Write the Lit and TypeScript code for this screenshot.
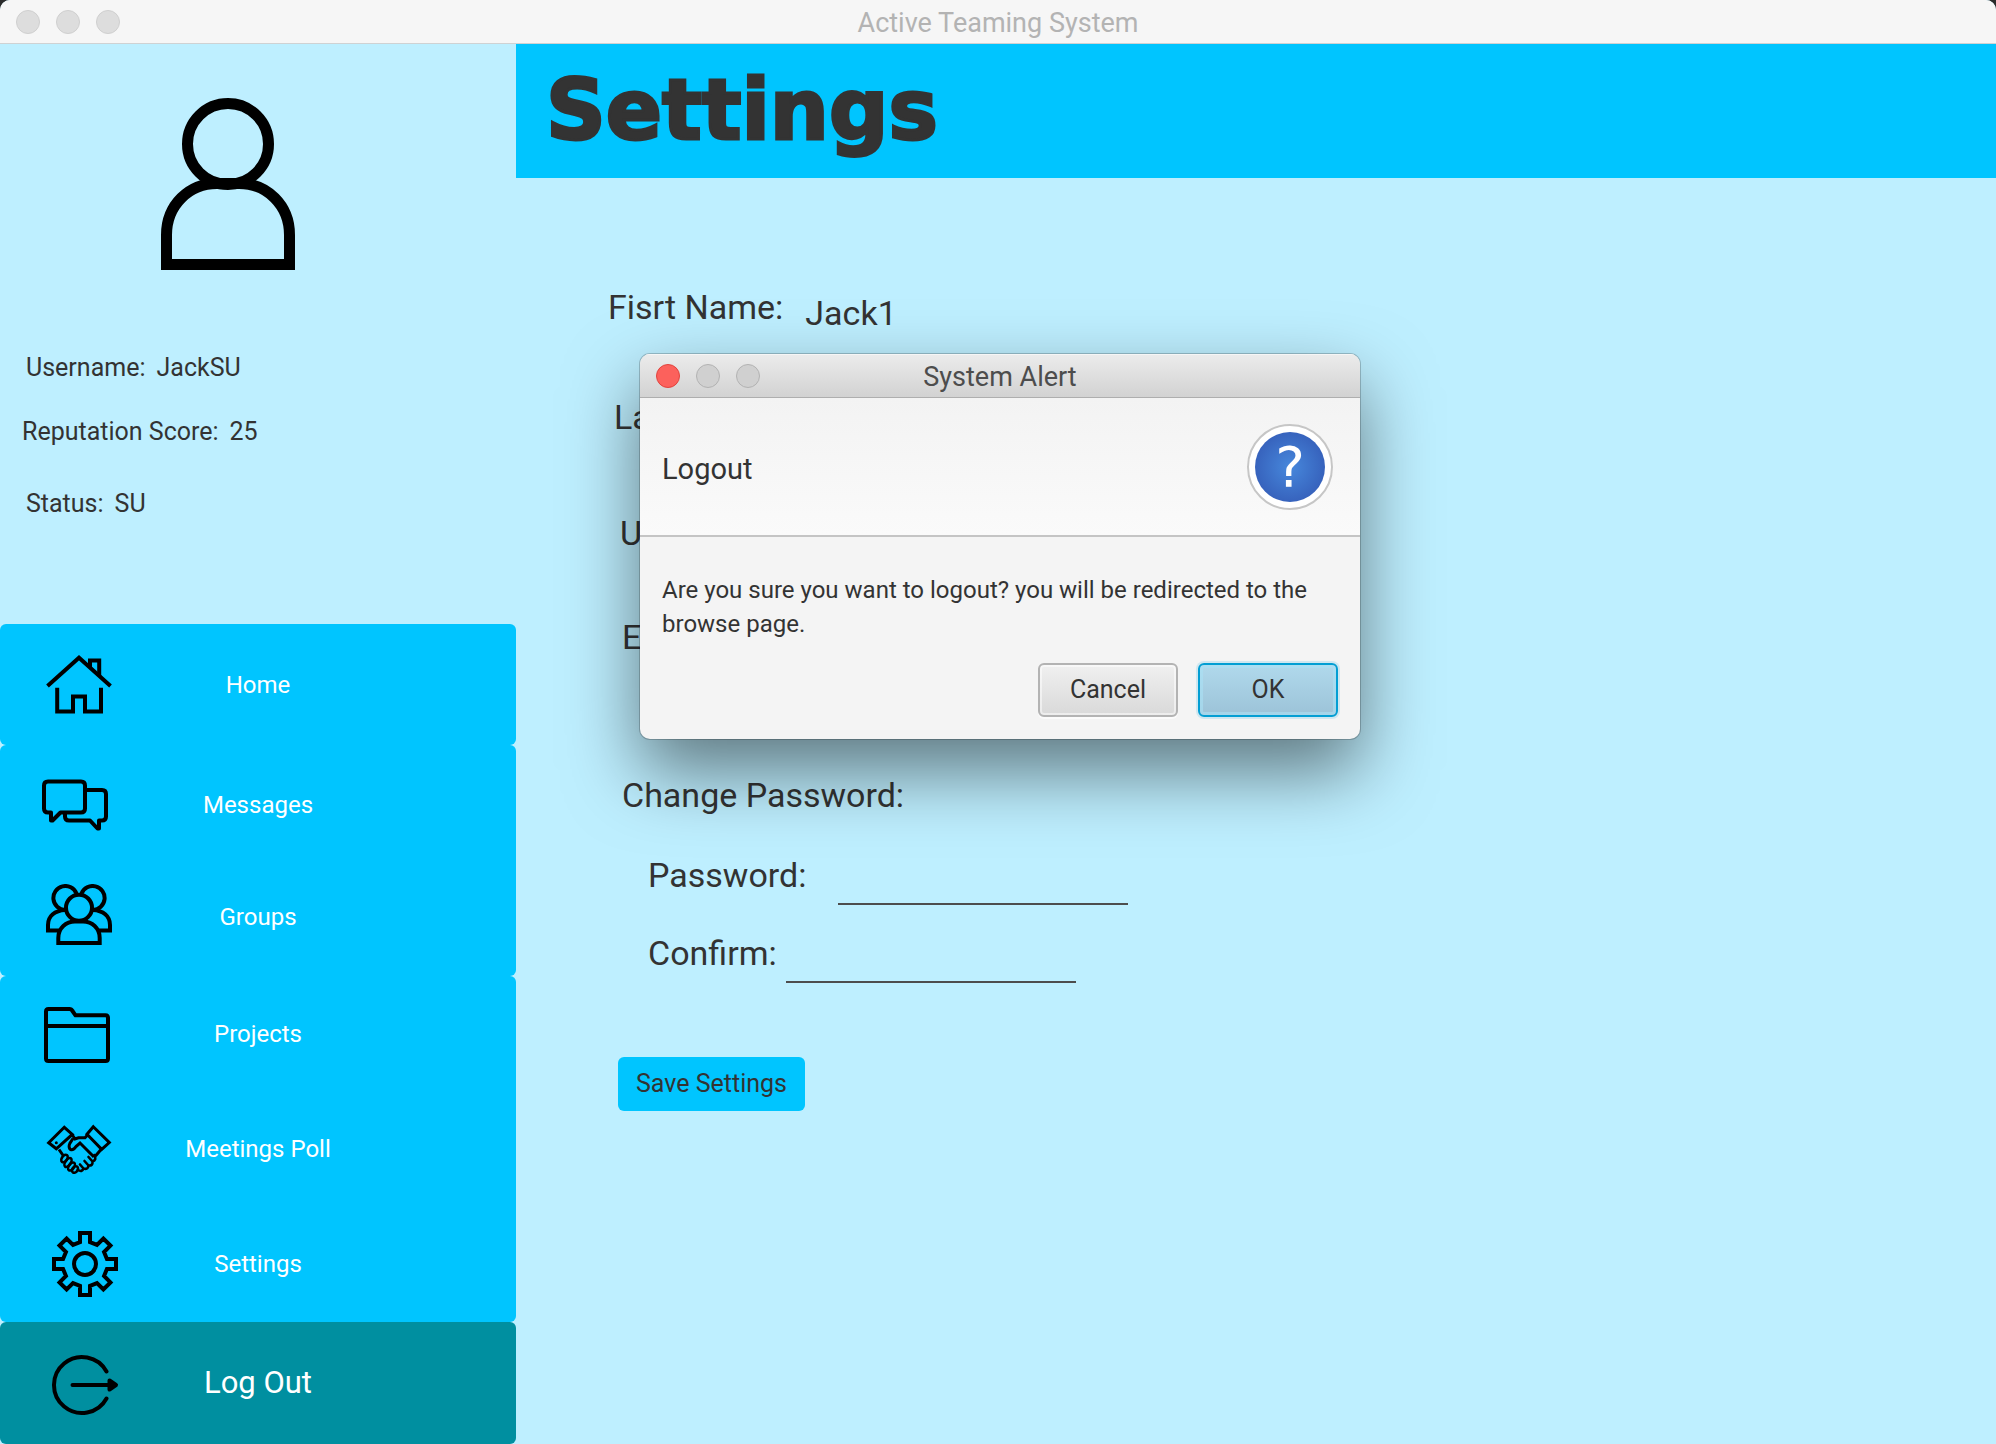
import { LitElement, html, css, svg, nothing, type TemplateResult, type SVGTemplateResult } from "lit";
import { customElement, property } from "lit/decorators.js";
import { classMap } from "lit/directives/class-map.js";

/** Outline of a cog centred on (cx, cy), with evenly spaced square teeth. */
function cogPath(cx: number, cy: number, teeth: number, outer: number, root: number, half: number): string {
  const points: string[] = [];
  const base = Math.sqrt(root * root - half * half);
  for (let i = 0; i < teeth; i++) {
    const a = (i * 2 * Math.PI) / teeth;
    for (const [x, y] of [[-half, -base], [-half, -outer], [half, -outer], [half, -base]]) {
      const px = cx + x * Math.cos(a) - y * Math.sin(a);
      const py = cy + x * Math.sin(a) + y * Math.cos(a);
      points.push(`${px.toFixed(2)} ${py.toFixed(2)}`);
    }
  }
  return `M${points.join("L")}Z`;
}

const icons: Record<string, SVGTemplateResult> = {
  home: svg`<g stroke-width="4">
    <path d="M5.5 34 37 5.8 68.5 34"/>
    <path d="M48 15V8.5H57.2V24"/>
    <path d="M15.2 35.8V59.5H31V44.5H43V59.5H59V35.8"/></g>`,
  messages: svg`<g stroke-width="4" stroke-linejoin="round">
    <path d="M6 9.5H39q4 0 4 4V36.5q0 4-4 4H18.5L10.5 48.5H9V40.5H6q-4 0-4-4V13.5q0-4 4-4z"/>
    <path d="M43 18H60q4 0 4 4V44.5q0 4-4 4H57V56.5H55.5L48 48.5H27q-4 0-4-4V41"/></g>`,
  groups: svg`<g stroke-width="4">
    <circle cx="37" cy="23.7" r="13"/>
    <path d="M34.5 9.5A12 12 0 1 0 23 26M39.5 9.5A12 12 0 1 1 51 26"/>
    <path d="M23 26C13 26.5 6 32 6 41V46.5H18M51 26C61 26.5 68 32 68 41V46.5H56"/>
    <path d="M16.3 59V54C16.3 44 24 37.5 33 37.5H41C50 37.5 57.7 44 57.7 54V59z"/></g>`,
  projects: svg`<g stroke-width="4" stroke-linejoin="round">
    <path d="M4 25V10.5Q4 8 6.5 8H27.5Q29.5 8 30.5 10L33.5 14.3H63.5Q66 14.3 66 17V57.5Q66 60 63.5 60H6.5Q4 60 4 57.5V25H66"/></g>`,
  meetings: svg`<g stroke-width="3">
    <path d="M6.7 26.8 22.3 11.3 30.3 18.4 14.3 32.8zM51.3 10.8 67.3 26.5 59.7 33.4 45 18.2z"/>
    <path d="M30 18.5 33 23 36.5 21.8H43L46 18.5M31 22.5 27.8 27.5Q26 31.5 28.5 33.5Q31.5 34.5 34 30.5L38 27L52 41M17 33.5 21.5 40M59 33.5 53.5 40"/>
    <g stroke-width="2.6">
      <ellipse cx="22.5" cy="42.5" rx="2.6" ry="4.2" transform="rotate(35 22.5 42.5)"/>
      <ellipse cx="26" cy="46.5" rx="2.6" ry="5" transform="rotate(35 26 46.5)"/>
      <ellipse cx="29.5" cy="50.5" rx="2.6" ry="4.6" transform="rotate(35 29.5 50.5)"/>
      <ellipse cx="33" cy="53.5" rx="2.6" ry="3.6" transform="rotate(35 33 53.5)"/>
      <path stroke-linecap="round" d="M36 54Q40 56.5 41.5 52.5Q46 54 46.5 49.5Q51 50 50.5 45.5Q55 44 52.5 39M41.5 52.5 38 48.5M46.5 49.5 42.5 45M50.5 45.5 46.5 41"/>
    </g></g>
    <circle cx="14.3" cy="26.8" r="1.5" fill="currentColor" stroke="none"/>`,
  settings: svg`<g stroke-width="4">
    <path d=${cogPath(43, 33, 8, 31, 22.5, 5)}/>
    <circle cx="43" cy="33" r="11"/></g>`,
  logout: svg`<g stroke-width="4" stroke-linecap="round" stroke-linejoin="round">
    <path d="M64.5 21.5A28 28 0 1 0 64.5 48.5M30.5 35H66"/>
    <path d="M67.5 30.5 74 35 67.5 39.5z" fill="currentColor"/></g>`,
};

@customElement("traffic-lights")
class TrafficLights extends LitElement {
  @property({ type: Boolean }) active = false;

  static styles = css`
    :host { display: flex; gap: 16px; }
    .light {
      width: 24px; height: 24px; padding: 0; box-sizing: border-box;
      border: 1px solid #cfcfcf; border-radius: 50%; background: #dddddd;
    }
    .light.active { border-color: #b2b2b2; background: #d0d0d0; }
    .light.close { border-color: #e0443e; background: #fc615c; }
  `;

  render() {
    return html`${["Close", "Minimize", "Zoom"].map(
      (name) => html`<button type="button" aria-label=${name}
        class=${classMap({ light: true, active: this.active, close: this.active && name === "Close" })}></button>`
    )}`;
  }
}

@customElement("nav-button")
class NavButton extends LitElement {
  @property() icon = "";
  @property() label = "";
  @property({ type: Boolean }) accent = false;

  static styles = css`
    :host { display: flex; }
    .item {
      flex: 1; display: grid; align-items: center; padding: 0; border: 0;
      border-radius: var(--corners, 6px); background: #00c5ff; color: #ffffff;
      font: 24px/32px Roboto, "Liberation Sans", sans-serif; cursor: pointer;
    }
    .item.accent { background: #008fa0; font-size: 31px; line-height: 40px; }
    .icon, .label { grid-area: 1 / 1; }
    .icon {
      width: 78px; height: 66px; margin-left: 42px;
      color: #000000; fill: none; stroke: currentColor;
    }
    .label { justify-self: center; }
  `;

  render() {
    return html`<button type="button" class=${classMap({ item: true, accent: this.accent })}>
      <svg class="icon" viewBox="0 0 78 66" aria-hidden="true">${icons[this.icon]}</svg>
      <span class="label">${this.label}</span>
    </button>`;
  }
}

@customElement("system-alert")
class SystemAlert extends LitElement {
  static styles = css`
    :host { display: block; width: 720px; color: #333333; font: 24px/34px Roboto, "Liberation Sans", sans-serif; }
    .dialog {
      border-radius: 10px; overflow: hidden; background: #f4f4f4;
      box-shadow: 0 0 0 1px rgba(0, 0, 0, 0.2), 0 32px 72px rgba(0, 0, 0, 0.5);
    }
    .bar {
      display: grid; grid-template-columns: 1fr auto 1fr; align-items: center;
      height: 44px; padding: 0 16px; box-sizing: border-box;
      border-bottom: 1px solid #aeaeae; box-shadow: inset 0 1px #f6f6f6;
      background: linear-gradient(#ececec, #d2d2d2);
    }
    .title { margin: 0; padding-top: 2px; font-size: 27px; font-weight: 400; color: #4d4d4d; }
    .head {
      display: flex; align-items: center; justify-content: space-between;
      padding: 26px 27px 25px 22px; border-bottom: 2px solid #c4c4c4;
      background: linear-gradient(#f3f3f3, #fafafa);
    }
    .heading { margin: 0; padding-top: 4px; font-size: 29px; font-weight: 400; }
    .badge {
      display: grid; place-items: center; width: 86px; height: 86px; box-sizing: border-box;
      border: 2px solid #c6c6c6; border-radius: 50%; background: #ffffff;
    }
    .mark {
      width: 70px; height: 70px; border-radius: 50%; text-align: center;
      background: radial-gradient(#4788dc, #3763bd 70%); color: #ffffff;
      font: 56px/70px "DejaVu Sans", "Noto Sans", sans-serif;
    }
    .body { padding: 36px 22px 22px; }
    .message { margin: 0 0 22px; }
    .actions { display: flex; justify-content: flex-end; gap: 20px; }
    .action {
      width: 140px; height: 54px; padding: 0; box-sizing: border-box;
      border: 2px solid #b3b3b3; border-radius: 6px; color: inherit; font: inherit; font-size: 25px;
      background: linear-gradient(#f0f0f0, #d9d9d9);
      box-shadow: inset 0 0 0 2px rgba(255, 255, 255, 0.5), 0 2px #fbfbfb;
    }
    .action.primary {
      border-color: #039ed3; background: linear-gradient(#b0d9ec, #9cc3d8);
      box-shadow: inset 0 0 0 3px rgba(170, 225, 245, 0.6), 0 0 0 2px #cfe7f0;
    }
  `;

  render() {
    return html`<section class="dialog" role="dialog" aria-labelledby="alert-title">
      <header class="bar">
        <traffic-lights active></traffic-lights>
        <h2 class="title" id="alert-title">System Alert</h2>
      </header>
      <div class="head">
        <p class="heading">Logout</p>
        <div class="badge"><span class="mark">?</span></div>
      </div>
      <div class="body">
        <p class="message">Are you sure you want to logout? you will be redirected to the browse page.</p>
        <div class="actions">
          <button type="button" class="action">Cancel</button>
          <button type="button" class="action primary">OK</button>
        </div>
      </div>
    </section>`;
  }
}

interface Detail { key: string; label: string; value?: string; }

@customElement("app-root")
class AppRoot extends LitElement {
  static styles = css`
    :host {
      display: block; background: #2b2b2b; color: #333333;
      font-family: Roboto, "Liberation Sans", sans-serif;
    }
    .window {
      position: relative; display: flex; flex-direction: column; min-height: 100vh;
      border-radius: 10px 10px 0 0; overflow: hidden; background: #beefff;
    }
    .bar {
      display: grid; grid-template-columns: 1fr auto 1fr; align-items: center;
      height: 44px; padding: 0 16px; box-sizing: border-box;
      border-bottom: 1px solid #cfd2d3; background: #f6f6f6;
    }
    .bar-title { padding-top: 2px; font-size: 27px; line-height: 34px; color: #b3b3b3; }
    .layout { flex: 1; display: grid; grid-template-columns: minmax(320px, 516px) 1fr; }

    .sidebar { display: flex; flex-direction: column; justify-content: space-between; }
    .avatar {
      display: block; width: 134px; height: 172px; margin: 54px 0 82px 161px;
      fill: none; stroke: #000000; stroke-width: 11;
    }
    .profile { margin: 0; padding-left: 26px; font-size: 25px; line-height: 32px; }
    .fact { display: flex; gap: 11px; margin-bottom: 32px; }
    .fact dd { margin: 0; }
    .fact.score { margin-left: -4px; margin-bottom: 40px; }
    .nav { display: flex; flex-direction: column; }
    .nav .home { min-height: 121px; }
    .nav .messages { min-height: 119px; --corners: 6px 6px 0 0; }
    .nav .groups { min-height: 118px; margin-top: -6px; --corners: 0 0 6px 6px; }
    .nav .projects { min-height: 116px; --corners: 6px 6px 0 0; }
    .nav .meetings { min-height: 113px; --corners: 0; }
    .nav .settings { min-height: 117px; --corners: 0 0 6px 6px; }
    .nav .logout { min-height: 122px; }

    .banner { display: flex; align-items: center; height: 134px; padding-left: 30px; background: #00c5ff; }
    .banner-title {
      margin: 0; font: 700 83px/104px "DejaVu Sans", "Liberation Sans", sans-serif;
      -webkit-text-stroke: 3px #333333;
    }

    .form { padding: 107px 40px 40px 92px; font-size: 34px; line-height: 44px; }
    .row { display: flex; }
    .row.first { gap: 22px; height: 44px; margin-bottom: 66px; }
    .row.first .value { padding-top: 6px; }
    .row.last { margin: 0 0 72px 6px; }
    .row.user { margin: 0 0 60px 12px; }
    .row.email { margin: 0 0 114px 14px; }
    .group { margin: 0; padding: 0; border: 0; }
    .legend { margin-left: 14px; padding: 0; margin-bottom: 36px; }
    .row.password { gap: 32px; margin: 0 0 26px 40px; }
    .row.confirm { gap: 9px; margin: 0 0 74px 40px; }
    .field {
      width: 290px; height: 52px; padding: 0; box-sizing: border-box;
      border: 0; border-bottom: 2px solid #4d4d4d; border-radius: 0;
      background: transparent; color: inherit; font: inherit; outline: none;
    }
    .save {
      display: block; height: 54px; margin-left: 10px; padding: 0 18px; border: 0; border-radius: 6px;
      background: #00c5ff; color: inherit; font: 25px/32px Roboto, "Liberation Sans", sans-serif;
    }

    .overlay {
      position: absolute; inset: 0; display: flex; align-items: flex-start; justify-content: center;
      padding: 354px 0 0 4px; box-sizing: border-box; pointer-events: none;
    }
    .overlay system-alert { pointer-events: auto; }
  `;

  private details: Detail[] = [
    { key: "first", label: "Fisrt Name:", value: "Jack1" },
    { key: "last", label: "Last Name:" },
    { key: "user", label: "Username:" },
    { key: "email", label: "Email:" },
  ];

  private links = [
    ["home", "Home"],
    ["messages", "Messages"],
    ["groups", "Groups"],
    ["projects", "Projects"],
    ["meetings", "Meetings Poll"],
    ["settings", "Settings"],
    ["logout", "Log Out"],
  ];

  private sidebar(): TemplateResult {
    return html`<aside class="sidebar">
      <div>
        <svg class="avatar" viewBox="0 0 134 172" aria-hidden="true">
          <circle cx="67" cy="46" r="40.5"/>
          <path d="M5.5 166.5V137C5.5 107 28 85.5 56 85.5H78C106 85.5 128.5 107 128.5 137V166.5z"/>
        </svg>
        <dl class="profile">
          <div class="fact"><dt>Username:</dt><dd>JackSU</dd></div>
          <div class="fact score"><dt>Reputation Score:</dt><dd>25</dd></div>
          <div class="fact"><dt>Status:</dt><dd>SU</dd></div>
        </dl>
      </div>
      <nav class="nav">
        ${this.links.map(([key, label]) => html`<nav-button class=${key} icon=${key} label=${label} ?accent=${key === "logout"}></nav-button>`)}
      </nav>
    </aside>`;
  }

  render() {
    return html`<div class="window">
      <header class="bar">
        <traffic-lights></traffic-lights>
        <span class="bar-title">Active Teaming System</span>
      </header>
      <div class="layout">
        ${this.sidebar()}
        <main>
          <div class="banner"><h1 class="banner-title">Settings</h1></div>
          <form class="form">
            ${this.details.map(({ key, label, value }) => html`<div class="row ${key}">
              <span>${label}</span>${value ? html`<span class="value">${value}</span>` : nothing}
            </div>`)}
            <fieldset class="group">
              <legend class="legend">Change Password:</legend>
              <div class="row password">
                <label for="password">Password:</label>
                <input class="field" id="password" type="password">
              </div>
              <div class="row confirm">
                <label for="confirm">Confirm:</label>
                <input class="field" id="confirm" type="password">
              </div>
            </fieldset>
            <button type="button" class="save">Save Settings</button>
          </form>
        </main>
      </div>
      <div class="overlay"><system-alert></system-alert></div>
    </div>`;
  }
}
